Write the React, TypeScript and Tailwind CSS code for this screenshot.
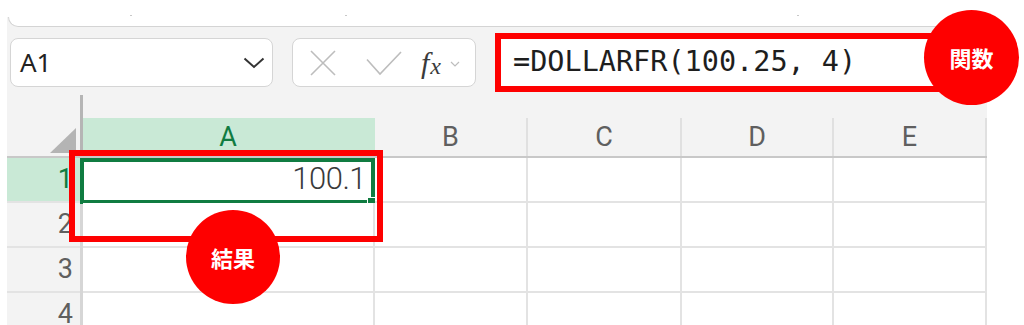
import React from 'react';

function HeaderCell({ label, w, active }: { label: string; w: string; active?: boolean }) {
  return (
    <div
      className={`${w} h-full flex items-center justify-center border-r-2 ${
        active ? 'bg-[#c9e9d6] text-[#107c41] border-[#c9e9d6]' : 'text-[#5f5f5f] border-[#e0e0e0]'
      } text-[27px]`}
      style={{ fontFamily: 'Roboto, "Noto Sans", sans-serif' }}
    >
      {label}
    </div>
  );
}

const colWidths = ['w-[292px]', 'w-[153px]', 'w-[154px]', 'w-[152px]', 'w-[153px]'];

function Row({ n, first }: { n: number; first?: boolean }) {
  return (
    <div className="flex h-[45px] shrink-0">
      <div
        className={`w-[73px] h-full flex items-center justify-end pr-[7px] text-[27px] border-b-2 border-[#e3e3e3] ${
          first ? 'bg-[#c9e9d6] text-[#107c41]' : 'text-[#5f5f5f]'
        }`}
        style={{ fontFamily: 'Roboto, "Noto Sans", sans-serif' }}
      >
        {n}
      </div>
      <div className="w-[3px] h-full bg-[#d6d6d6]" />
      {colWidths.map((w, i) => (
        <div key={i} className={`${w} h-full bg-white border-r-2 border-b-2 border-[#e3e3e3] relative`}>
          {first && i === 0 && (
            <>
              <div className="absolute left-[-3px] right-[-2px] top-0 bottom-[-3px] border-solid border-[4px] border-[#107c41]" />
              <div className="absolute right-[-3px] bottom-[-5px] w-[9px] h-[9px] bg-[#107c41] border border-white" />
              <div
                className="absolute right-[7px] top-0 bottom-0 flex items-center text-[31px] font-light text-[#3a3a3a] tracking-[-0.5px]"
                style={{ fontFamily: 'Roboto, "Noto Sans", sans-serif' }}
              >
                100.1
              </div>
            </>
          )}
        </div>
      ))}
    </div>
  );
}

export default function App() {
  return (
    <div
      className="relative w-[1024px] h-[325px] bg-white overflow-hidden"
      style={{ fontFamily: '"Noto Sans", "Noto Sans CJK JP", sans-serif' }}
    >
      <div className="ml-[7px] w-[980px] h-full flex flex-col">
        {/* top white strip with tiny ticks */}
        <div className="h-[17px] bg-white flex items-end pb-[1px] shrink-0">
          <span className="ml-[123px] w-[2px] h-[1px] bg-[#c8c8c8]" />
          <span className="ml-[213px] w-[2px] h-[1px] bg-[#c8c8c8]" />
          <span className="ml-[450px] w-[2px] h-[1px] bg-[#c8c8c8]" />
        </div>
        <div className="flex-1 bg-[#f3f3f3] flex flex-col">
          {/* ribbon bottom */}
          <div className="h-[10px] ml-[1px] bg-white rounded-bl-[10px] border-b border-l border-[#d4d4d4] shrink-0" />

          {/* formula row */}
          <div className="mt-[6px] h-[59px] flex items-center shrink-0">
            {/* name box */}
            <div className="ml-[3px] w-[263px] h-[49px] bg-white border-[1.5px] border-[#d5d5d5] rounded-[8px] flex items-center justify-between pl-[9px] pr-[7px]">
              <span className="text-[26px] text-[#222]" style={{ fontFamily: '"Noto Sans", sans-serif' }}>
                A1
              </span>
              <svg width="22" height="12" viewBox="0 0 22 12">
                <path d="M1.5 1.5 L11 10 L20.5 1.5" fill="none" stroke="#333" strokeWidth="2" />
              </svg>
            </div>
            {/* function box */}
            <div className="ml-[19px] w-[184px] h-[49px] bg-white border-[1.5px] border-[#d5d5d5] rounded-[8px] flex items-center pl-[17px]">
              <svg width="26" height="26" viewBox="0 0 26 26">
                <path d="M1 1 L25 25 M25 1 L1 25" stroke="#bdbdbd" strokeWidth="1.6" fill="none" />
              </svg>
              <svg className="ml-[30px]" width="36" height="26" viewBox="0 0 36 26">
                <path d="M1 9.5 L14 24 L35 2" stroke="#bdbdbd" strokeWidth="1.6" fill="none" />
              </svg>
              <span
                className="ml-[19px] text-[30px] italic text-[#3a3a3a] leading-none flex items-end"
                style={{ fontFamily: '"Liberation Serif", serif' }}
              >
                <span>f</span>
                <span className="text-[24px] ml-[1px]" style={{ fontFamily: '"Liberation Serif", serif' }}>x</span>
              </span>
              <svg className="ml-[9px] mt-[3px]" width="10" height="6" viewBox="0 0 10 6">
                <path d="M1 1 L5 5 L9 1" stroke="#bdbdbd" strokeWidth="1.2" fill="none" />
              </svg>
            </div>
            {/* formula bar */}
            <div className="ml-[19px] w-[450px] h-[59px] bg-white border-[6px] border-[#fe0000] flex items-center pl-[12px]">
              <span
                className="text-[28.5px] text-[#1e1e1e] whitespace-pre"
                style={{ fontFamily: '"DejaVu Sans Mono", "Liberation Mono", monospace' }}
              >
                =DOLLARFR(100.25, 4)
              </span>
            </div>
          </div>

          {/* spacer above column headers */}
          <div className="h-[26px] flex shrink-0">
            <div className="w-[73px]" />
            <div className="w-[3px] mt-[3px] bg-[#b5b5b5]" />
          </div>

          {/* column header row */}
          <div className="h-[40px] flex shrink-0 border-b-2 border-[#c8c8c8]">
            <div className="w-[73px] h-full flex items-end justify-end pr-[4px] pb-[3px]">
              <svg width="26" height="25" viewBox="0 0 26 25">
                <polygon points="26,0 26,25 0,25" fill="#b4b4b4" />
              </svg>
            </div>
            <div className="w-[3px] h-full bg-[#b5b5b5]" />
            <HeaderCell label="A" w="w-[292px]" active />
            <HeaderCell label="B" w="w-[153px]" />
            <HeaderCell label="C" w="w-[154px]" />
            <HeaderCell label="D" w="w-[152px]" />
            <HeaderCell label="E" w="w-[153px]" />
          </div>

          <Row n={1} first />
          <Row n={2} />
          <Row n={3} />
          <Row n={4} />
        </div>
      </div>

      {/* annotation: result rectangle */}
      <div className="absolute left-[69px] top-[150px] w-[314px] h-[92px] border-[6px] border-[#fe0000]" />

      {/* annotation circles */}
      <div
        className="absolute left-[186px] top-[210px] w-[94px] h-[94px] rounded-full bg-[#fe0000] flex items-center justify-center text-white text-[22px] font-bold"
        style={{ fontFamily: '"Noto Sans CJK JP", sans-serif' }}
      >
        結果
      </div>
      <div
        className="absolute left-[924px] top-[10px] w-[95px] h-[95px] rounded-full bg-[#fe0000] flex items-center justify-center text-white text-[22px] font-bold"
        style={{ fontFamily: '"Noto Sans CJK JP", sans-serif' }}
      >
        関数
      </div>
    </div>
  );
}
